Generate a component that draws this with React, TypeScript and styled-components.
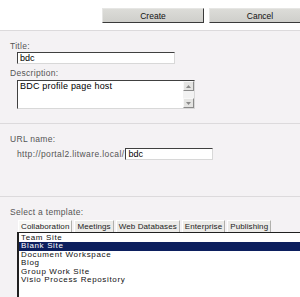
import React from "react";
import styled, { createGlobalStyle } from "styled-components";

const Global = createGlobalStyle`
  html, body { margin: 0; padding: 0; background: #f4f2f4; overflow: hidden; }
  body { font-family: "Liberation Sans", Arial, sans-serif; font-size: 9px; color: #333; }
`;

const Page = styled.div`
  width: 300px;
  height: 297px;
  overflow: hidden;
  background: #f4f2f4;
`;

const TopBar = styled.div`
  height: 31px;
  background: #ffffff;
  border-bottom: 1px solid #dcdadc;
  display: flex;
  align-items: flex-start;
  padding: 8px 0 0 102px;
  gap: 5px;
  box-sizing: border-box;
`;

const Button = styled.div`
  flex: none;
  width: 102px;
  height: 15px;
  box-sizing: border-box;
  background: linear-gradient(#dcdcd8, #cfcfcb);
  border-top: 1px solid #e6e6e4;
  border-left: 1px solid #e6e6e4;
  border-right: 1px solid #3a3a3a;
  border-bottom: 1px solid #3a3a3a;
  display: flex;
  align-items: center;
  justify-content: center;
  font-size: 8.5px;
  color: #111;
`;

const Section = styled.div<{ $h: number; $pt: number; $last?: boolean }>`
  height: ${(p) => p.$h}px;
  box-sizing: border-box;
  padding: ${(p) => p.$pt}px 0 0 10px;
  border-bottom: ${(p) => (p.$last ? "none" : "1px solid #dcdadc")};
`;

const Label = styled.div<{ $mt?: number }>`
  font-size: 8.5px;
  line-height: 10px;
  color: #555;
  margin-top: ${(p) => p.$mt ?? 0}px;
  letter-spacing: 0.3px;
`;

const TextInput = styled.div<{ $w: number }>`
  width: ${(p) => p.$w}px;
  height: 12px;
  box-sizing: border-box;
  background: #fff;
  border-top: 1px solid #404040;
  border-left: 1px solid #404040;
  border-right: 1px solid #d8d8d8;
  border-bottom: 1px solid #d8d8d8;
  font-size: 9px;
  line-height: 10px;
  padding-left: 2px;
  color: #000;
`;

const Indent = styled.div<{ $mt: number }>`
  margin: ${(p) => p.$mt}px 0 0 7px;
`;

const TextArea = styled.div`
  width: 178px;
  height: 29px;
  box-sizing: border-box;
  background: #fff;
  border-top: 1px solid #404040;
  border-left: 1px solid #404040;
  border-right: 1px solid #d8d8d8;
  border-bottom: 1px solid #d8d8d8;
  display: flex;
`;

const TextAreaText = styled.div`
  flex: 1;
  font-size: 9px;
  line-height: 10px;
  padding-left: 2px;
  color: #000;
  letter-spacing: 0.2px;
`;

const ScrollBar = styled.div`
  width: 11px;
  display: flex;
  flex-direction: column;
  justify-content: space-between;
  background: #f2f2f2;
`;

const ScrollBtn = styled.div`
  height: 10px;
  box-sizing: border-box;
  background: #e4e4e2;
  border-top: 1px solid #f8f8f8;
  border-left: 1px solid #f8f8f8;
  border-right: 1px solid #8a8a8a;
  border-bottom: 1px solid #8a8a8a;
  display: flex;
  align-items: center;
  justify-content: center;
`;

const UrlRow = styled.div`
  display: flex;
  align-items: center;
  margin: 4px 0 0 7px;
  gap: 1px;
`;

const UrlText = styled.span`
  font-size: 8.5px;
  color: #555;
  letter-spacing: 0.38px;
`;

const Tabs = styled.div`
  display: flex;
  margin: 3px 0 0 8px;
  gap: 2px;
  height: 12px;
`;

const Tab = styled.div<{ $active?: boolean }>`
  height: 12px;
  box-sizing: border-box;
  padding: 0 2px;
  background: ${(p) => (p.$active ? "#f7f7f5" : "#ecebe8")};
  border-top: 1px solid #ffffff;
  border-left: 1px solid #ffffff;
  border-right: 1px solid #b0b0ac;
  font-size: 8px;
  line-height: 11px;
  color: #222;
  letter-spacing: 0.1px;
`;

const ListBox = styled.div`
  margin-left: 7px;
  height: 80px;
  background: #fff;
  border-top: 1px solid #202020;
  border-left: 2px solid #202020;
  box-sizing: border-box;
  padding-top: 1px;
`;

const Item = styled.div<{ $sel?: boolean }>`
  height: 8.4px;
  line-height: 8.4px;
  font-size: 8px;
  padding-left: 2px;
  color: ${(p) => (p.$sel ? "#fff" : "#111")};
  background: ${(p) => (p.$sel ? "#0c1f5e" : "transparent")};
  letter-spacing: 0.65px;
`;

const Arrow = ({ up }: { up?: boolean }) => (
  <svg width="5" height="3" viewBox="0 0 5 3">
    <polygon points={up ? "0,3 5,3 2.5,0" : "0,0 5,0 2.5,3"} fill="#8a8a8a" />
  </svg>
);

const templates = [
  "Team Site",
  "Blank Site",
  "Document Workspace",
  "Blog",
  "Group Work Site",
  "Visio Process Repository",
];

const tabs = ["Collaboration", "Meetings", "Web Databases", "Enterprise", "Publishing"];

export default function App() {
  return (
    <Page>
      <Global />
      <TopBar>
        <Button>Create</Button>
        <Button>Cancel</Button>
      </TopBar>
      <Section $h={93} $pt={10}>
        <Label>Title:</Label>
        <Indent $mt={1}>
          <TextInput $w={158}>bdc</TextInput>
        </Indent>
        <Label $mt={4}>Description:</Label>
        <Indent $mt={2}>
          <TextArea>
            <TextAreaText>BDC profile page host</TextAreaText>
            <ScrollBar>
              <ScrollBtn>
                <Arrow up />
              </ScrollBtn>
              <ScrollBtn>
                <Arrow />
              </ScrollBtn>
            </ScrollBar>
          </TextArea>
        </Indent>
      </Section>
      <Section $h={73} $pt={10}>
        <Label>URL name:</Label>
        <UrlRow>
          <UrlText>http://portal2.litware.local/</UrlText>
          <TextInput $w={88}>bdc</TextInput>
        </UrlRow>
      </Section>
      <Section $h={120} $pt={10} $last>
        <Label>Select a template:</Label>
        <Tabs>
          {tabs.map((t, i) => (
            <Tab key={t} $active={i === 0}>
              {t}
            </Tab>
          ))}
        </Tabs>
        <ListBox>
          {templates.map((t) => (
            <Item key={t} $sel={t === "Blank Site"}>
              {t}
            </Item>
          ))}
        </ListBox>
      </Section>
    </Page>
  );
}
